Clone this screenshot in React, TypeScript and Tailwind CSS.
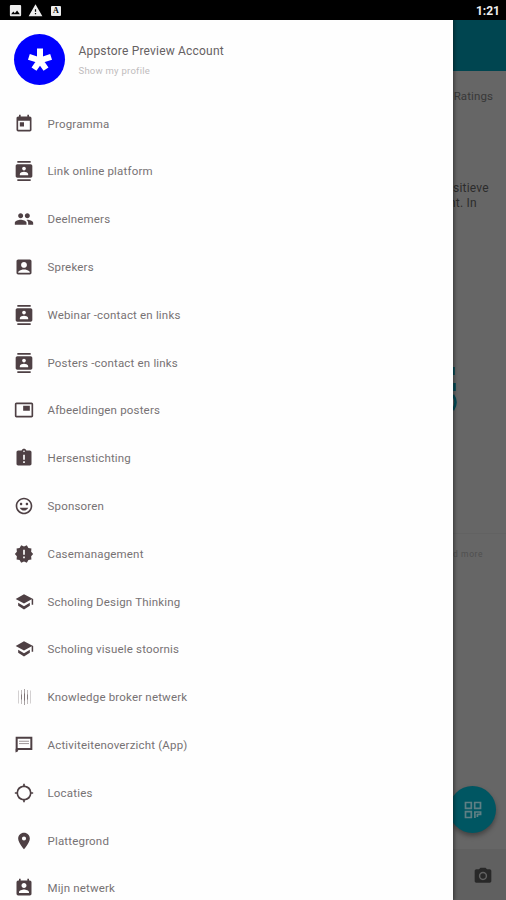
import type { ComponentType } from "react";
import {
  MdAccountBox,
  MdAssignmentLate,
  MdContacts,
  MdImage,
  MdLocationSearching,
  MdNewReleases,
  MdPeople,
  MdPermContactCalendar,
  MdPhotoCamera,
  MdPictureInPicture,
  MdPlace,
  MdTagFaces,
  MdToday,
  MdWarning,
} from "react-icons/md";

type Icon = ComponentType<{ className?: string }>;

function DottedLines({ className }: { className?: string }) {
  return (
    <svg viewBox="0 0 20 20" className={className} stroke="currentColor" strokeLinecap="butt">
      <path d="M4.5 3.5v13M16.5 3.5v13" strokeWidth="0.6" opacity="0.4" />
      <path d="M7.5 3v14M13.5 3v14" strokeWidth="0.7" opacity="0.5" />
      <path d="M10.5 2v16" strokeWidth="0.8" opacity="0.6" />
      <path d="M7.5 7.5v5M10.5 6.5v7M13.5 7.5v5" strokeWidth="1" opacity="0.5" />
    </svg>
  );
}

function MessageLines({ className }: { className?: string }) {
  return (
    <svg viewBox="0 0 24 24" className={className} fill="none" stroke="currentColor">
      <path d="M3.2 20V3.4h17.6v13.4H4" strokeWidth="2.4" />
      <path d="M6 7.5h12M6 10.3h12" strokeWidth="1.2" opacity="0.55" />
      <path d="M2 16.4h5l-5 5z" fill="currentColor" stroke="none" />
    </svg>
  );
}

function GraduationCap({ className }: { className?: string }) {
  return (
    <svg viewBox="0 0 24 24" className={className} fill="currentColor">
      <path d="M12 2.8L2 8.3l10 5.5 9.2-5v6.6H23V8.3z" />
      <path d="M5 13v3.6l7 4.4 7-4.4V13l-7 4.1z" />
    </svg>
  );
}

function LetterBadge() {
  return (
    <span className="flex h-[10px] w-[10px] items-center justify-center rounded-[1px] bg-[#eee] font-['Liberation_Serif',serif] text-[8px] font-bold leading-none text-black">
      A
    </span>
  );
}

function QrGlyph() {
  return (
    <svg viewBox="0 0 18 18" className="h-[18px] w-[18px]" fill="none" stroke="#5f7f84" strokeWidth="1.7">
      <path d="M1.5 1.5h5.8v5.8H1.5zM10.7 1.5h5.8v5.8h-5.8zM1.5 10.7h5.8v5.8H1.5z" />
      <path d="M10 11h6.6v2.4h-3.4M10.9 11v6M13.4 13v3" />
    </svg>
  );
}

const items: { label: string; icon: Icon }[] = [
  { label: "Programma", icon: MdToday },
  { label: "Link online platform", icon: MdContacts },
  { label: "Deelnemers", icon: MdPeople },
  { label: "Sprekers", icon: MdAccountBox },
  { label: "Webinar -contact en links", icon: MdContacts },
  { label: "Posters -contact en links", icon: MdContacts },
  { label: "Afbeeldingen posters", icon: MdPictureInPicture },
  { label: "Hersenstichting", icon: MdAssignmentLate },
  { label: "Sponsoren", icon: MdTagFaces },
  { label: "Casemanagement", icon: MdNewReleases },
  { label: "Scholing Design Thinking", icon: GraduationCap },
  { label: "Scholing visuele stoornis", icon: GraduationCap },
  { label: "Knowledge broker netwerk", icon: DottedLines },
  { label: "Activiteitenoverzicht (App)", icon: MessageLines },
  { label: "Locaties", icon: MdLocationSearching },
  { label: "Plattegrond", icon: MdPlace },
  { label: "Mijn netwerk", icon: MdPermContactCalendar },
];

function StatusBar() {
  return (
    <header className="flex h-5 shrink-0 items-center justify-between bg-black pl-[8px] pr-[6px] text-[#eee]">
      <div className="flex items-center">
        <MdImage className="h-[15px] w-[15px]" />
        <MdWarning className="ml-[5px] h-[15px] w-[15px]" />
        <span className="ml-[8px] mt-[1px]"><LetterBadge /></span>
      </div>
      <span className="mt-[2px] text-[12px] font-bold leading-none">1:21</span>
    </header>
  );
}

function Profile() {
  return (
    <div className="flex h-[79.7px] shrink-0 items-start pl-[14px] pt-[14px]">
      <div className="flex h-[51px] w-[51px] items-center justify-center rounded-full bg-[#0000ff]">
        <svg viewBox="0 0 26 26" className="h-[26px] w-[26px]" stroke="white" strokeWidth="6">
          <path d="M13 13.5V1.5M13 13.5L1.9 9.9M13 13.5l11.1-3.6M13 13.5l-6 8.6M13 13.5l6 8.6" />
        </svg>
      </div>
      <div className="ml-[13.5px] pt-[9px]">
        <p className="whitespace-nowrap text-[12px] leading-4 tracking-[0.19px] text-[#666163]">Appstore Preview Account</p>
        <p className="mt-[6px] whitespace-nowrap text-[9.5px] leading-3 tracking-[0.25px] text-[#bebcbd]">Show my profile</p>
      </div>
    </div>
  );
}

export default function App() {
  return (
    <div className="flex h-[900px] w-[506px] flex-col overflow-hidden bg-[#666] font-[Roboto,sans-serif]">
      <StatusBar />
      <div className="flex min-h-0 flex-1">
        <aside className="z-10 flex w-[453px] shrink-0 flex-col overflow-hidden bg-[#fefefe] shadow-[0_0_4px_1px_rgba(0,0,0,0.5)]">
          <Profile />
          <nav>
            {items.map(({ label, icon: ItemIcon }) => (
              <div key={label} className="flex h-[47.8px] items-center pl-[14px]">
                <ItemIcon className="h-5 w-5 shrink-0 text-[#4e4044]" />
                <span className="ml-[13.5px] whitespace-nowrap text-[11.5px] leading-4 tracking-[0.18px] text-[#777274]">{label}</span>
              </div>
            ))}
          </nav>
        </aside>
        <main className="flex w-[53px] flex-col text-[#333]">
          <div className="h-[51px] shrink-0 bg-[#004550]" />
          <div className="flex h-[91px] shrink-0 justify-end pr-[13px] pt-[17px] text-[11.5px] leading-4 tracking-[0.1px] text-[#383838]">Ratings</div>
          <p className="h-[184px] shrink-0 pt-[19px] text-[12px] leading-[14.5px] tracking-[0.2px] text-[#2c2c2c]">
            sitieve
            <br />
            <span className="-ml-[4px]">nt. In</span>
          </p>
          <div className="flex h-[187px] shrink-0 flex-col">
            <svg viewBox="0 0 6 50" className="mt-[18px] h-[50px] w-[6px]" fill="none" stroke="#004b57" strokeWidth="2.6">
              <path d="M0.5 3v8M1.5 27v-8M0 31q5 7 0 15" />
            </svg>
          </div>
          <div className="h-[253px] shrink-0 border-t border-[#626262] pt-[14px] text-[8.5px] leading-3 tracking-[0.6px] text-[#505050]">
            d more
          </div>
          <div className="flex h-[63px] shrink-0 items-start">
            <div className="-ml-[4px] flex h-[47px] w-[47px] shrink-0 items-center justify-center rounded-full bg-[#005662] shadow-[0_3px_5px_rgba(0,0,0,0.35)]">
              <QrGlyph />
            </div>
          </div>
          <div className="flex flex-1 items-center justify-center bg-[#606060] pl-[6px] pt-[2px]">
            <MdPhotoCamera className="h-5 w-5 text-[#282828]" />
          </div>
        </main>
      </div>
    </div>
  );
}
